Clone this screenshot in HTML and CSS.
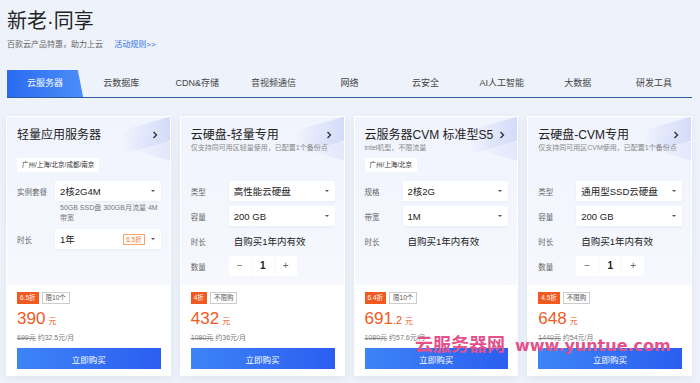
FILE: index.html
```html
<!DOCTYPE html>
<html lang="zh-CN">
<head>
  <meta charset="UTF-8" />
  <meta name="viewport" content="width=device-width, initial-scale=1.0"/>
  <title>新老同享 | 云产品特惠</title>
  <link rel="stylesheet" href="styles.css">
</head>
<body>
  <div class="page">
    <header class="hero">
      <h1>新老·同享</h1>
      <p class="sub">百款云产品特惠，助力上云 <a class="rule" href="#">活动规则&gt;&gt;</a></p>
    </header>

    <nav class="tabs">
      <div class="tab active">云服务器</div>
      <div class="tab">云数据库</div>
      <div class="tab">CDN&amp;存储</div>
      <div class="tab">音视频通信</div>
      <div class="tab">网络</div>
      <div class="tab">云安全</div>
      <div class="tab">AI人工智能</div>
      <div class="tab">大数据</div>
      <div class="tab">研发工具</div>
    </nav>

    <div class="cards">
      <!-- 轻量应用服务器 -->
      <div class="card">
        <div class="card-top">
          <div class="card-head">
            <div class="title">轻量应用服务器 <svg class="more" viewBox="0 0 6 8"><polyline points="1.5,1 4.5,4 1.5,7" /></svg></div>
            <div class="desc"></div>
            <span class="region">广州/上海/北京/成都/南京</span>
          </div>
          <div class="opts">
            <div class="row">
              <span class="label">实例套餐</span>
              <div class="select"><span>2核2G4M</span><i class="caret"></i></div>
            </div>
            <div class="note">50GB SSD盘 300GB月流量 4M<br>带宽</div>
            <div class="row">
              <span class="label">时长</span>
              <div class="select"><span>1年</span><span class="off">6.5折</span><i class="caret"></i></div>
            </div>
          </div>
        </div>
        <div class="card-bottom">
          <div class="badges"><span class="badge red">6.5折</span><span class="badge line">限10个</span></div>
          <div class="price">390<small>元</small></div>
          <div class="old"><s>699元</s> 约32.5元/月</div>
          <button class="buy">立即购买</button>
        </div>
      </div>

      <!-- 云硬盘-轻量专用 -->
      <div class="card">
        <div class="card-top">
          <div class="card-head">
            <div class="title">云硬盘-轻量专用 <svg class="more" viewBox="0 0 6 8"><polyline points="1.5,1 4.5,4 1.5,7" /></svg></div>
            <div class="desc">仅支持同可用区轻量使用，已配置1个备份点</div>
          </div>
          <div class="opts">
            <div class="row">
              <span class="label">类型</span>
              <div class="select"><span>高性能云硬盘</span><i class="caret"></i></div>
            </div>
            <div class="row">
              <span class="label">容量</span>
              <div class="select"><span>200 GB</span><i class="caret"></i></div>
            </div>
            <div class="row">
              <span class="label">时长</span>
              <span class="value">自购买1年内有效</span>
            </div>
            <div class="row">
              <span class="label">数量</span>
              <div class="stepper"><span>−</span><span class="num">1</span><span>+</span></div>
            </div>
          </div>
        </div>
        <div class="card-bottom">
          <div class="badges"><span class="badge red">4折</span><span class="badge line">不限购</span></div>
          <div class="price">432<small>元</small></div>
          <div class="old"><s>1080元</s> 约36元/月</div>
          <button class="buy">立即购买</button>
        </div>
      </div>

      <!-- 云服务器CVM -->
      <div class="card">
        <div class="card-top">
          <div class="card-head">
            <div class="title">云服务器CVM 标准型S5 <svg class="more" viewBox="0 0 6 8"><polyline points="1.5,1 4.5,4 1.5,7" /></svg></div>
            <div class="desc">intel机型，不限流量</div>
            <span class="region">广州/上海/北京</span>
          </div>
          <div class="opts">
            <div class="row">
              <span class="label">规格</span>
              <div class="select"><span>2核2G</span><i class="caret"></i></div>
            </div>
            <div class="row">
              <span class="label">带宽</span>
              <div class="select"><span>1M</span><i class="caret"></i></div>
            </div>
            <div class="row">
              <span class="label">时长</span>
              <span class="value">自购买1年内有效</span>
            </div>
          </div>
        </div>
        <div class="card-bottom">
          <div class="badges"><span class="badge red">6.4折</span><span class="badge line">限10个</span></div>
          <div class="price">691<em>.2</em><small>元</small></div>
          <div class="old"><s>1080元</s> 约57.6元/月</div>
          <button class="buy">立即购买</button>
        </div>
      </div>

      <!-- 云硬盘-CVM专用 -->
      <div class="card">
        <div class="card-top">
          <div class="card-head">
            <div class="title">云硬盘-CVM专用 <svg class="more" viewBox="0 0 6 8"><polyline points="1.5,1 4.5,4 1.5,7" /></svg></div>
            <div class="desc">仅支持同可用区CVM使用，已配置1个备份点</div>
          </div>
          <div class="opts">
            <div class="row">
              <span class="label">类型</span>
              <div class="select"><span>通用型SSD云硬盘</span><i class="caret"></i></div>
            </div>
            <div class="row">
              <span class="label">容量</span>
              <div class="select"><span>200 GB</span><i class="caret"></i></div>
            </div>
            <div class="row">
              <span class="label">时长</span>
              <span class="value">自购买1年内有效</span>
            </div>
            <div class="row">
              <span class="label">数量</span>
              <div class="stepper"><span>−</span><span class="num">1</span><span>+</span></div>
            </div>
          </div>
        </div>
        <div class="card-bottom">
          <div class="badges"><span class="badge red">4.5折</span><span class="badge line">不限购</span></div>
          <div class="price">648<small>元</small></div>
          <div class="old"><s>1440元</s> 约54元/月</div>
          <button class="buy">立即购买</button>
        </div>
      </div>
    </div>
  </div>

  <div class="watermark"><span class="wm-cn">云服务器网</span><span class="wm-en">www.yuntue.com</span></div>
</body>
</html>
```

FILE: styles.css
```css
body {
  margin: 0;
  font-family: "Liberation Sans", "Noto Sans CJK SC", sans-serif;
  background: #eef2fa;
  color: #222;
  width: 700px;
  height: 383px;
  overflow: hidden;
  position: relative;
}

.page {
  padding: 0 8px 0 6px;
}

.hero h1 {
  margin: 0;
  padding: 8px 0 0 1px;
  font-size: 20px;
  line-height: 26px;
  font-weight: 400;
  color: #222;
}

.sub {
  margin: 5px 0 0 1px;
  font-size: 8px;
  line-height: 12px;
  color: #666;
}

.rule {
  margin-left: 9px;
  color: #2f6fe8;
  text-decoration: none;
}

.tabs {
  display: flex;
  margin: 19px 0 0 1px;
  height: 27px;
  border-bottom: 1.5px solid #2d5da1;
}

.tab {
  flex: 1;
  text-align: center;
  font-size: 9px;
  line-height: 27px;
  color: #444;
}

.tab.active {
  color: #fff;
  background: linear-gradient(90deg, #2a6bef, #4b8ef8);
  clip-path: polygon(0 0, 93% 0, 100% 100%, 0 100%);
}

.cards {
  display: flex;
  gap: 9px;
  margin-top: 18px;
}

.card {
  flex: 1;
  height: 260px;
  overflow: hidden;
  background: #fff;
  border: 1px solid #fff;
  box-sizing: border-box;
  box-shadow: 0 2px 8px rgba(40, 70, 130, 0.08);
  display: flex;
  flex-direction: column;
}

.card-top {
  height: 168px;
  padding: 10px 9px 0 10px;
  box-sizing: border-box;
  background: linear-gradient(180deg, #f1f4fd, #f6f8fe);
  position: relative;
}

/* soft decoration in the top right corner */
.card-top::before {
  content: "";
  position: absolute;
  right: -16px;
  top: 4px;
  width: 62px;
  height: 24px;
  border-radius: 8px;
  background: linear-gradient(90deg, rgba(214, 221, 248, 0.1), rgba(190, 200, 245, 0.75));
  transform: skewY(-16deg);
}

.card-top::after {
  content: "";
  position: absolute;
  right: -12px;
  top: 22px;
  width: 50px;
  height: 18px;
  border-radius: 6px;
  background: linear-gradient(90deg, rgba(225, 230, 250, 0.05), rgba(212, 219, 248, 0.7));
  transform: skewY(16deg);
}

.card-head {
  position: relative;
  z-index: 1;
  height: 43px;
}

.title {
  display: flex;
  justify-content: space-between;
  align-items: center;
  font-size: 12px;
  line-height: 16px;
  color: #222;
  white-space: nowrap;
}

.more {
  width: 6px;
  height: 8px;
  fill: none;
  stroke: #333;
  stroke-width: 1.4;
  margin-right: 3px;
}

.desc {
  font-size: 7px;
  line-height: 10px;
  height: 10px;
  color: #888;
  white-space: nowrap;
}

.region {
  display: inline-block;
  margin-top: 3px;
  padding: 0 5px;
  font-size: 6.5px;
  line-height: 14px;
  background: #fff;
  color: #333;
}

.opts {
  margin-top: 11px;
}

.row {
  display: flex;
  align-items: center;
  height: 20px;
  margin-bottom: 5px;
}

.label {
  width: 38px;
  flex-shrink: 0;
  font-size: 7.5px;
  color: #666;
}

.select {
  width: 108px;
  height: 20px;
  box-sizing: border-box;
  padding: 0 6px 0 5px;
  background: #fff;
  box-shadow: 0 1px 3px rgba(40, 70, 130, 0.06);
  display: flex;
  align-items: center;
  gap: 6px;
  font-size: 9.5px;
  color: #222;
}

.select span:first-child {
  flex: 1;
}

.caret {
  width: 0;
  height: 0;
  border-left: 2.5px solid transparent;
  border-right: 2.5px solid transparent;
  border-top: 2.5px solid #555;
}

.off {
  font-size: 6.5px;
  line-height: 9px;
  padding: 0 2px;
  border: 1px solid #f3a46e;
  color: #f0762f;
}

.note {
  margin: -3px 0 6px 43px;
  font-size: 7px;
  line-height: 10px;
  color: #777;
}

.value {
  font-size: 9.5px;
  color: #222;
  padding-left: 5px;
}

.stepper {
  display: flex;
  gap: 1px;
}

.stepper span {
  width: 22px;
  height: 20px;
  background: #fff;
  text-align: center;
  line-height: 20px;
  font-size: 10px;
  color: #666;
}

.stepper .num {
  color: #222;
  font-weight: bold;
}

.card-bottom {
  flex: 1;
  padding: 7px 9px 0 10px;
  background: #fff;
}

.badges {
  display: flex;
  gap: 3px;
  height: 12px;
}

.badge {
  font-size: 6.5px;
  line-height: 12px;
  padding: 0 3px;
}

.badge.red {
  background: #f2591f;
  color: #fff;
}

.badge.line {
  line-height: 10px;
  border: 1px solid #ccc;
  color: #555;
}

.price {
  margin-top: 7px;
  font-size: 17px;
  line-height: 16px;
  color: #ee5a24;
}

.price em {
  font-style: normal;
  font-size: 11px;
}

.price small {
  font-size: 8px;
  margin-left: 3px;
}

.old {
  margin-top: 3px;
  font-size: 7px;
  line-height: 10px;
  color: #777;
}

.old s {
  color: #888;
}

.buy {
  display: block;
  width: 100%;
  height: 21px;
  margin-top: 5px;
  border: none;
  background: linear-gradient(90deg, #3d84f6, #2b5ef0);
  color: #fff;
  font-family: inherit;
  font-size: 8.5px;
  padding: 0;
}

.watermark {
  position: absolute;
  left: 415px;
  top: 331px;
  display: flex;
  align-items: baseline;
  gap: 10px;
  color: #e6508a;
  font-weight: bold;
  z-index: 5;
}

.wm-cn {
  font-family: "Noto Sans CJK SC", sans-serif;
  font-size: 18px;
  line-height: 24px;
}

.wm-en {
  font-family: "DejaVu Sans", sans-serif;
  font-size: 16px;
  line-height: 24px;
}
```
